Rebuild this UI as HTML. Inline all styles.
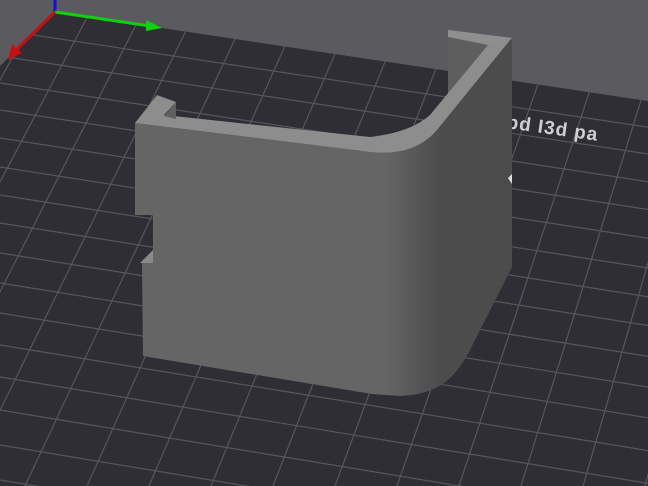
<!DOCTYPE html>
<html><head><style>
html,body{margin:0;padding:0;width:648px;height:486px;overflow:hidden;background:#5a5a5f;}
svg{display:block;position:absolute;left:0;top:0}
</style></head><body>
<svg width="648" height="486" viewBox="0 0 648 486" xmlns="http://www.w3.org/2000/svg">
<defs>
<clipPath id="bed"><polygon points="0,66 55,12 648,101 648,486 0,486"/></clipPath>
<linearGradient id="side" x1="385" y1="0" x2="440" y2="0" gradientUnits="userSpaceOnUse">
<stop offset="0" stop-color="#656565"/><stop offset="1" stop-color="#4c4c4c"/>
</linearGradient>
</defs>
<rect width="648" height="486" fill="#5a5a5f"/>
<polygon points="0,66 55,12 648,101 648,486 0,486" fill="#2f2e34"/>
<g clip-path="url(#bed)" stroke="#56565c" stroke-width="1.2" id="grid"></g>
<text x="0" y="0" transform="translate(506,128) rotate(8)" font-family="Liberation Sans, sans-serif" font-weight="bold" font-size="19" fill="#cfcfcf" letter-spacing="1">pd I3d pa</text>
<!-- axes -->
<line x1="55" y1="0" x2="55" y2="12" stroke="#1010e0" stroke-width="3"/>
<line x1="55" y1="12" x2="150" y2="26" stroke="#10d010" stroke-width="3"/>
<polygon points="162,28 146,20 146,31" fill="#10d010"/>
<line x1="55" y1="12" x2="16" y2="50" stroke="#c81010" stroke-width="3"/>
<polygon points="8,60 12,44 22,53" fill="#c81010"/>
<!-- object -->
<path d="M135,123 L370,152 C395,155 420,150 437,130 L510,40 L512,40 L512,267 L470,350 C455,378 440,394 400,396 L372,394 L143,356 L142,263 L153,250 L153,215 L135,215 Z" fill="url(#side)"/>
<polygon points="140,263 153,250 153,263" fill="#8a8a8a"/>
<!-- right inner face -->
<polygon points="448,31 490,38 488,45 448,95" fill="#5e5e5e"/>
<!-- rim -->
<path d="M135,123 L157,95 L176,102 L164,115 L370,137 C395,134 415,128 430,115 L488,45 L448,37 L448,30 L512,38 L510,40 L437,130 C420,150 395,155 370,152 Z" fill="#8d8d8d"/>
<polygon points="176,102 176,119 164,116" fill="#5f5f5f"/>
<polygon points="448,30 448,37 490,43 512,38" fill="#8f8f8f"/>
<polygon points="508,178 512,174 512,184" fill="#ddd"/>
</svg>
<script>
(function(){
var g=document.getElementById('grid'),s='';
var ys=[30,56,83,110,138,167,195,223,253,283,313,345,377,410,445,480,516];
ys.forEach(function(y0,i){var m=0.15+0.02*i/ys.length;s+='<line x1="0" y1="'+y0+'" x2="660" y2="'+(y0+m*660)+'"/>';});
var PX=1493,PY=-2638;
for(var k=-8;k<14;k++){var xb=25+62*k;s+='<line x1="'+xb+'" y1="486" x2="'+PX+'" y2="'+PY+'"/>';}
g.innerHTML=s;
})();
</script>
</body></html>
